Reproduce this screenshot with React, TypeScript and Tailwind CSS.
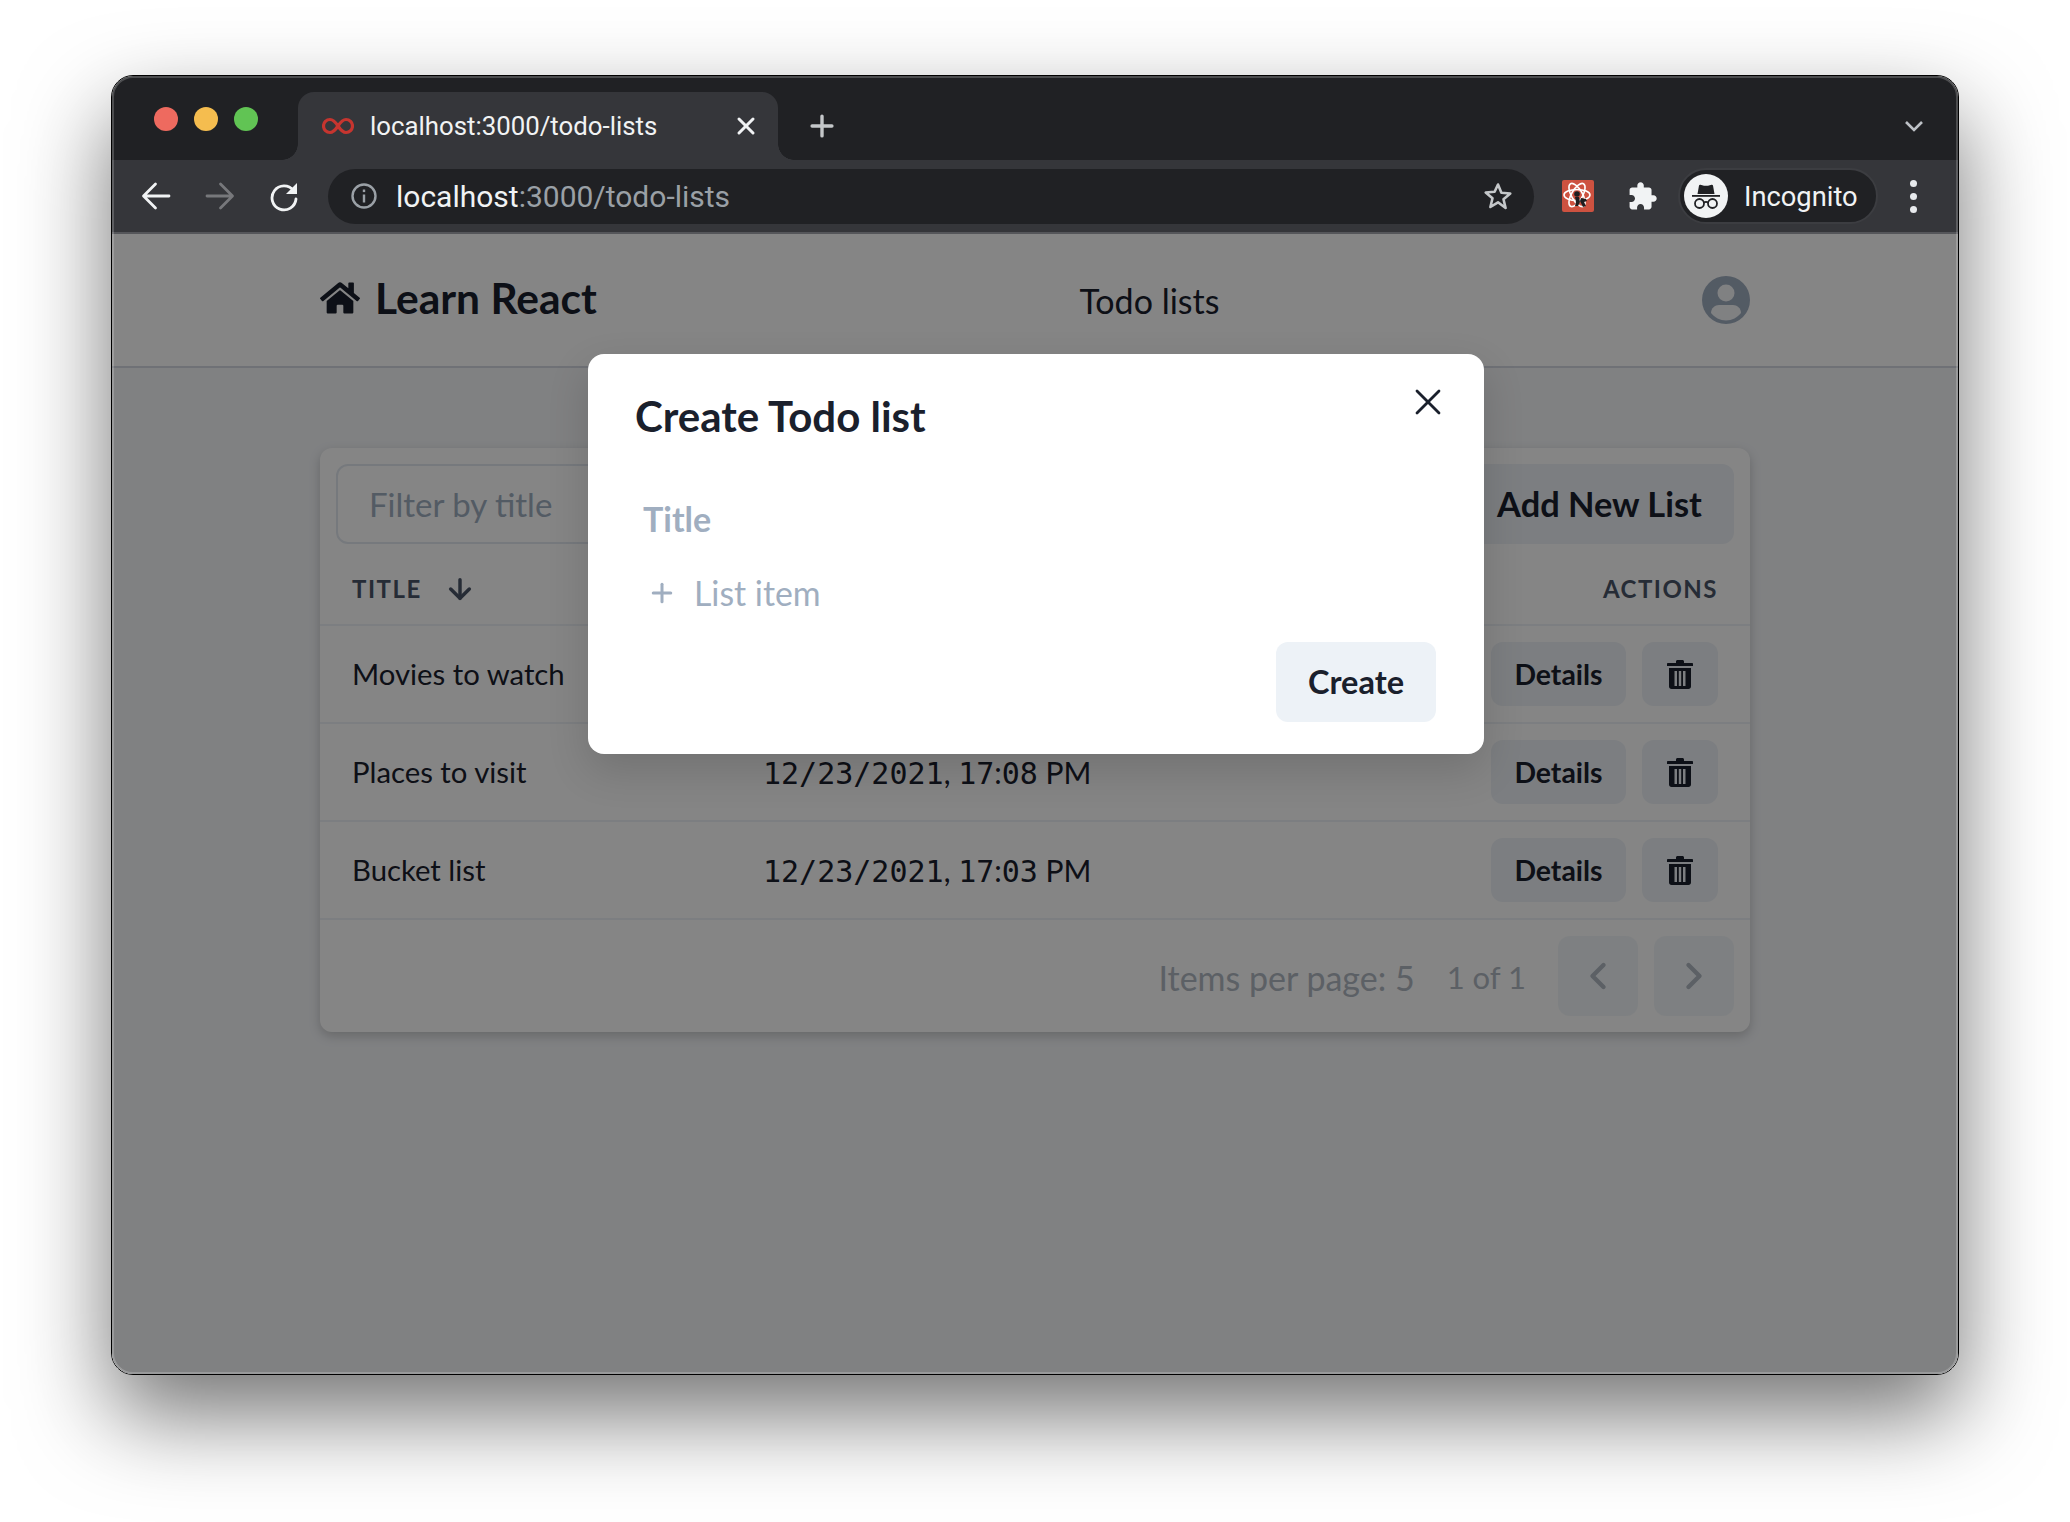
import React from 'react';
import { FaHome } from 'react-icons/fa';
import { FiArrowDown, FiChevronLeft, FiChevronRight, FiPlus, FiX } from 'react-icons/fi';

const rows = [
  { title: 'Movies to watch', date: '12/23/2021, 17:10 PM' },
  { title: 'Places to visit', date: '12/23/2021, 17:08 PM' },
  { title: 'Bucket list', date: '12/23/2021, 17:03 PM' },
];

// digits come out in the mono face, the rest of the date stays proportional
const DateText = ({ value }: { value: string }) => (
  <span className="text-[30px] pt-[2px] ml-[-1px] whitespace-pre">
    {value.split(/(\d[\d/]*)/).map((part, i) =>
      /\d/.test(part) ? (
        <span key={i} className="font-['DejaVu_Sans_Mono',monospace]">
          {part}
        </span>
      ) : (
        <span key={i}>{part}</span>
      ),
    )}
  </span>
);

const TrashIcon = () => (
  <svg viewBox="0 0 26 30" className="w-[26px] h-[30px] fill-[#1A202C]">
    <path d="M9 2.5C9 1.5 9.8 1 10.5 1h5c.7 0 1.5.5 1.5 1.5V4h8c.6 0 1 .4 1 1v2H0V5c0-.6.4-1 1-1h8V2.5z" />
    <path
      fillRule="evenodd"
      d="M2 9h22v18.5c0 1.4-1.1 2.5-2.500 2.500h-17C3.100 30 2 28.900 2 27.500V9zm5.500 3v15h2.500V12H7.500zm4.300 0v15h2.400V12h-2.400zm4.200 0v15h2.500V12H16z"
    />
  </svg>
);

const UserIcon = () => (
  <svg viewBox="0 0 48 48" className="w-12 h-12 mt-[2px]">
    <circle cx="24" cy="24" r="24" fill="#A0AEC0" />
    <circle cx="24" cy="17" r="8.500" fill="#F5F7FA" />
    <path d="M9 37c0-5 4-8 8-8h14c4 0 8 3 8 8-3.500 4.500-9 7.500-15 7.500S12.500 41.500 9 37z" fill="#F5F7FA" />
  </svg>
);

const BackArrow = ({ color }: { color: string }) => (
  <svg viewBox="0 0 32 32" className="w-8 h-8" fill="none" stroke={color} strokeWidth="2.800" strokeLinecap="round" strokeLinejoin="round">
    <path d="M29 16H4M15.500 4 3.500 16l12 12" />
  </svg>
);

const ForwardArrow = ({ color }: { color: string }) => (
  <svg viewBox="0 0 32 32" className="w-8 h-8" fill="none" stroke={color} strokeWidth="2.800" strokeLinecap="round" strokeLinejoin="round">
    <path d="M3 16h25M16.500 4l12 12-12 12" />
  </svg>
);

const ReloadIcon = () => (
  <svg viewBox="0 0 32 32" className="w-8 h-8">
    <path d="M25.500 10.500A12 12 0 1 0 28 19" fill="none" stroke="#f1f3f4" strokeWidth="2.800" strokeLinecap="round" />
    <path d="M29 3v11H18z" fill="#f1f3f4" />
  </svg>
);

const InfoIcon = () => (
  <svg viewBox="0 0 28 28" className="w-7 h-7">
    <circle cx="14" cy="14" r="11.500" fill="none" stroke="#9aa0a6" strokeWidth="2.400" />
    <rect x="12.800" y="12.500" width="2.400" height="8" fill="#9aa0a6" />
    <rect x="12.800" y="7.500" width="2.400" height="2.600" fill="#9aa0a6" />
  </svg>
);

const StarIcon = () => (
  <svg viewBox="0 0 30 30" className="w-[30px] h-[30px]">
    <path
      d="M15 3.500l3.400 8.300 8.900.7-6.800 5.800 2.100 8.700L15 21.300l-7.600 4.700 2.100-8.700-6.800-5.800 8.900-.7z"
      fill="none"
      stroke="#c4c7c9"
      strokeWidth="2.600"
      strokeLinejoin="round"
    />
  </svg>
);

const InfinityIcon = () => (
  <svg viewBox="0 0 32 18" className="w-8 h-[18px] shrink-0">
    <path
      d="M16 9c-2.500-3.800-4.800-6.500-8-6.500a6.500 6.500 0 0 0 0 13c3.200 0 5.500-2.700 8-6.500s4.800-6.500 8-6.500a6.500 6.500 0 0 1 0 13c-3.200 0-5.500-2.700-8-6.500z"
      fill="none"
      stroke="#c6352f"
      strokeWidth="3.200"
    />
  </svg>
);

const AtomExtension = () => (
  <div className="w-8 h-8 rounded-[2px] bg-[#cd5240] shrink-0">
    <svg viewBox="0 0 32 32" className="w-8 h-8">
      <g fill="none" stroke="#fff" strokeWidth="1.600">
        <ellipse cx="15" cy="15" rx="13" ry="5.500" />
        <ellipse cx="15" cy="15" rx="13" ry="5.500" transform="rotate(60 15 15)" />
        <ellipse cx="15" cy="15" rx="13" ry="5.500" transform="rotate(120 15 15)" />
      </g>
      <circle cx="15" cy="14" r="2.800" fill="#1d1d1f" />
      <path d="M13 17h4l1 5-2 4h-3l1-4zM19 18l5 1 1 2-3 1 2 4-3 1-2-4-1-2z" fill="#1d1d1f" />
    </svg>
  </div>
);

const PuzzleIcon = () => (
  <svg viewBox="0 0 24 24" className="w-[31px] h-[31px] fill-[#f1f3f4] shrink-0">
    <path d="M20.500 11H19V7c0-1.100-.9-2-2-2h-4V3.500C13 2.120 11.880 1 10.500 1S8 2.120 8 3.500V5H4c-1.100 0-1.990.9-1.990 2v3.800H3.500c1.490 0 2.700 1.210 2.700 2.700s-1.210 2.700-2.700 2.700H2V20c0 1.100.9 2 2 2h3.800v-1.500c0-1.490 1.210-2.700 2.700-2.700 1.490 0 2.700 1.210 2.700 2.700V22H17c1.100 0 2-.9 2-2v-4h1.500c1.380 0 2.500-1.120 2.500-2.500S21.880 11 20.500 11z" />
  </svg>
);

const IncognitoIcon = () => (
  <div className="w-11 h-11 rounded-full bg-[#f1f3f4] shrink-0">
    <svg viewBox="0 0 44 44" className="w-11 h-11">
      <path d="M15 11.500c.2-.8.9-1 1.500-.8l3.500 1h4l3.500-1c.6-.2 1.300 0 1.500.8l1.500 8.500h-17z" fill="#202124" />
      <rect x="8" y="21" width="28" height="1.800" fill="#202124" />
      <g fill="none" stroke="#202124" strokeWidth="1.800">
        <circle cx="15.500" cy="29.500" r="4.500" />
        <circle cx="28.500" cy="29.500" r="4.500" />
        <path d="M20 28.500c1.300-.9 2.700-.9 4 0" />
      </g>
    </svg>
  </div>
);

export default function App() {
  return (
    <div className="w-[2070px] h-[1522px] bg-white pt-[75px] pl-[111px] font-['Lato',sans-serif] text-[#1A202C] overflow-hidden">
      <div className="relative w-[1848px] h-[1300px] rounded-[22px] border border-black shadow-[0_40px_90px_rgba(0,0,0,0.55)] overflow-hidden flex flex-col">
        {/* tab strip */}
        <div className="h-[84px] shrink-0 bg-[#202124] flex items-end">
          <div className="self-center flex gap-4 ml-[42px] mt-[2px]">
            <div className="w-6 h-6 rounded-full bg-[#ee6a5f]" />
            <div className="w-6 h-6 rounded-full bg-[#f5bd4f]" />
            <div className="w-6 h-6 rounded-full bg-[#61c454]" />
          </div>
          <div className="relative ml-[40px] w-[480px] h-[68px] rounded-t-[16px] bg-[#35363a] flex items-center pl-6 pr-[18px]">
            <div className="absolute -left-4 bottom-0 w-4 h-4 bg-[radial-gradient(circle_at_0_0,#202124_15.500px,#35363a_16px)]" />
            <div className="absolute -right-4 bottom-0 w-4 h-4 bg-[radial-gradient(circle_at_100%_0,#202124_15.500px,#35363a_16px)]" />
            <InfinityIcon />
            <span className="ml-4 font-['Roboto',sans-serif] text-[25.8px] text-[#f1f3f4] whitespace-nowrap">localhost:3000/todo-lists</span>
            <FiX className="ml-auto w-7 h-7 text-[#f1f3f4]" strokeWidth={2.600} />
          </div>
          <div className="self-end h-[68px] flex items-center ml-[27px]">
            <FiPlus className="w-[34px] h-[34px] text-[#c4c7c9]" strokeWidth={2.400} />
          </div>
          <svg viewBox="0 0 20 12" className="w-5 h-3 ml-auto mr-[34px] mb-[28px]" fill="none" stroke="#bdc1c6" strokeWidth="2.600">
            <path d="M2 2l8 8 8-8" />
          </svg>
        </div>

        {/* toolbar */}
        <div className="h-[74px] shrink-0 bg-[#35363a] border-b-2 border-[#55565a] flex items-center pl-[28px]">
          <div className="flex gap-8 items-center">
            <BackArrow color="#f1f3f4" />
            <ForwardArrow color="#77787b" />
            <ReloadIcon />
          </div>
          <div className="ml-[28px] w-[1206px] h-[55px] rounded-full bg-[#202124] flex items-center pl-[22px] pr-[21px]">
            <InfoIcon />
            <span className="ml-[18px] font-['Roboto',sans-serif] text-[30px] whitespace-nowrap text-[#f1f3f4]">
              localhost<span className="text-[#9aa0a6]">:3000/todo-lists</span>
            </span>
            <div className="ml-auto">
              <StarIcon />
            </div>
          </div>
          <div className="ml-[28px]">
            <AtomExtension />
          </div>
          <div className="ml-[33px]">
            <PuzzleIcon />
          </div>
          <div className="ml-[20px] w-[200px] h-[56px] rounded-full bg-[#202124] border-2 border-[#3c3d41] flex items-center pl-1">
            <IncognitoIcon />
            <span className="ml-[16px] pt-[2px] font-['Roboto',sans-serif] text-[27.3px] text-[#f1f3f4]">Incognito</span>
          </div>
          <div className="ml-[27px] w-4 flex flex-col items-center gap-[6px]">
            <div className="w-[7px] h-[7px] rounded-full bg-[#e8eaed]" />
            <div className="w-[7px] h-[7px] rounded-full bg-[#e8eaed]" />
            <div className="w-[7px] h-[7px] rounded-full bg-[#e8eaed]" />
          </div>
        </div>

        {/* page */}
        <div className="relative flex-1 bg-[#F5F7FA]">
          <nav className="h-[134px] bg-white border-b-2 border-[#D5D9E2] px-[208px] pb-[2px] flex items-center justify-between">
            <div className="flex items-center gap-[15px] mt-[-3px]">
              <FaHome className="w-10 h-10" />
              <span className="text-[42.5px] font-bold">Learn React</span>
            </div>
            <span className="text-[34px] mt-[2px]">Todo lists</span>
            <UserIcon />
          </nav>

          <main className="mt-[80px] mx-[208px] w-[1430px] bg-white rounded-[12px] shadow-[0_4px_12px_rgba(0,0,0,0.2)]">
            <div className="flex justify-between pl-[16px] pr-[16px] pt-[16px]">
              <div className="w-[500px] h-[80px] rounded-[12px] border-2 border-[#E2E8F0] flex items-center pl-[31px] pt-[1px] text-[33px] text-[#A0AEC0]">
                Filter by title
              </div>
              <button className="w-[269px] h-[80px] rounded-[12px] bg-[#EDF2F7] text-[34.4px] font-bold">Add New List</button>
            </div>

            <div className="h-[82px] border-b-2 border-[#EDF2F7] pl-[32px] pr-[32px] pt-[10px] flex items-center text-[24px] font-bold tracking-[1.500px] text-[#4A5568]">
              <span>TITLE</span>
              <FiArrowDown className="ml-[22px] w-8 h-8 text-[#4A5568]" strokeWidth={2.600} />
              <span className="ml-auto">ACTIONS</span>
            </div>

            {rows.map((row) => (
              <div key={row.title} className="h-[98px] border-b-2 border-[#EDF2F7] pl-[32px] pr-[32px] flex items-center text-[29.3px]">
                <span className="w-[412px]">{row.title}</span>
                <DateText value={row.date} />
                <button className="ml-auto w-[135px] h-[64px] rounded-[12px] bg-[#EDF2F7] text-[28.4px] font-bold">Details</button>
                <button className="ml-[16px] w-[76px] h-[64px] rounded-[12px] bg-[#EDF2F7] flex items-center justify-center">
                  <TrashIcon />
                </button>
              </div>
            ))}

            <div className="h-[112px] flex items-center justify-end pr-[16px] text-[#B0B8C2]">
              <span className="text-[34px] pt-[2px]">Items per page: 5</span>
              <span className="ml-[32px] text-[31px] pt-[2px]">1 of 1</span>
              <div className="ml-[32px] w-[80px] h-[80px] rounded-[12px] bg-[#EDF2F7]/70 flex items-center justify-center">
                <FiChevronLeft className="w-11 h-11" strokeWidth={2.400} />
              </div>
              <div className="ml-[16px] w-[80px] h-[80px] rounded-[12px] bg-[#EDF2F7]/70 flex items-center justify-center">
                <FiChevronRight className="w-11 h-11" strokeWidth={2.400} />
              </div>
            </div>
          </main>

          {/* modal overlay */}
          <div className="absolute inset-0 bg-black/48" />
          <div className="absolute left-[476px] top-[120px] w-[896px] h-[400px] rounded-[16px] bg-white shadow-[0_16px_40px_rgba(0,0,0,0.15)]">
            <div className="relative h-[126px] pl-[47px] pb-[2px] flex items-center">
              <h2 className="text-[42px] font-bold">Create Todo list</h2>
              <FiX className="absolute right-[34px] top-[26px] w-[44px] h-[44px]" strokeWidth={1.500} />
            </div>
            <div className="h-[78px] pl-[55px] pb-[2px] flex items-center text-[34px] font-bold text-[#A0AEC0]">Title</div>
            <div className="h-[70px] pl-[59px] flex items-center text-[33.8px] text-[#A0AEC0]">
              <FiPlus className="w-[30px] h-[30px]" strokeWidth={2.400} />
              <span className="ml-[17px]">List item</span>
            </div>
            <div className="mt-[14px] pr-12 flex justify-end">
              <button className="w-[160px] h-[80px] rounded-[12px] bg-[#EDF2F7] text-[32.5px] font-bold">Create</button>
            </div>
          </div>
        </div>

        {/* window edge highlight */}
        <div className="absolute inset-0 rounded-[21px] border-2 border-white/20 pointer-events-none" />
      </div>
    </div>
  );
}
